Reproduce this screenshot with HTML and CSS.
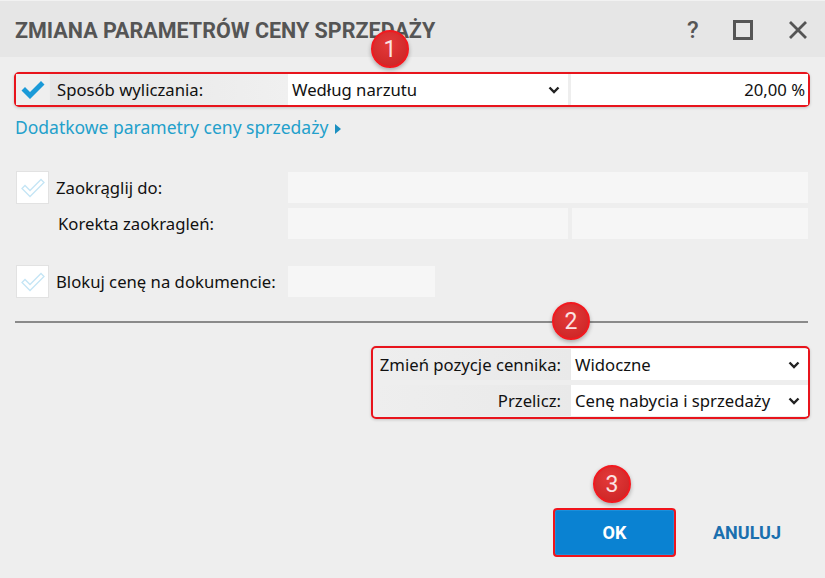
FILE: index.html
```html
<!DOCTYPE html>
<html lang="pl">
<head>
    <meta charset="UTF-8">
    <meta name="viewport" content="width=device-width, initial-scale=1.0">
    <title>Zmiana parametrów ceny sprzedaży</title>
    <link rel="stylesheet" href="styles.css">
</head>
<body>
    <div class="dialog">
        <header class="titlebar">
            <h1>ZMIANA PARAMETRÓW CENY SPRZEDAŻY</h1>
            <div class="win-buttons">
                <span class="help">?</span>
                <svg class="win-icon" width="22" height="22" viewBox="0 0 22 22"><rect x="2.5" y="2.5" width="17" height="17" fill="none" stroke="#555" stroke-width="3"/></svg>
                <svg class="win-icon" width="22" height="22" viewBox="0 0 22 22"><path d="M3 3 L19 19 M19 3 L3 19" stroke="#555" stroke-width="2.8" fill="none"/></svg>
            </div>
        </header>

        <main class="content">
            <div class="row highlight">
                <div class="check-cell">
                    <svg width="24" height="20" viewBox="0 0 24 20"><polygon points="0.5,10.5 4,7 9,12 20,1 23.5,4.5 9,19" fill="#1b9ad8"/></svg>
                </div>
                <div class="label label-shaded">Sposób wyliczania:</div>
                <div class="field white select">Według narzutu <svg class="chevron" width="12" height="8" viewBox="0 0 12 8"><path d="M1.5 1.5 L6 6 L10.5 1.5" stroke="#222" stroke-width="2.4" fill="none"/></svg></div>
                <div class="field white value second">20,00 %</div>
                <span class="badge badge-1">1</span>
            </div>

            <a class="more" href="#">Dodatkowe parametry ceny sprzedaży <span class="arrow"></span></a>

            <div class="row row-rounding">
                <div class="checkbox">
                    <svg width="24" height="20" viewBox="0 0 24 20"><polygon points="1,10.5 4,7.5 9,12.5 20,1.5 23,4.5 9,18.5" fill="#fff" stroke="#c4e5f5" stroke-width="1.3"/></svg>
                </div>
                <div class="label">Zaokrąglij do:</div>
                <div class="field grey wide"></div>
            </div>
            <div class="row row-tight">
                <div></div>
                <div class="label indent">Korekta zaokragleń:</div>
                <div class="field grey"></div>
                <div class="field grey second"></div>
            </div>

            <div class="row row-lock">
                <div class="checkbox">
                    <svg width="24" height="20" viewBox="0 0 24 20"><polygon points="1,10.5 4,7.5 9,12.5 20,1.5 23,4.5 9,18.5" fill="#fff" stroke="#c4e5f5" stroke-width="1.3"/></svg>
                </div>
                <div class="label">Blokuj cenę na dokumencie:</div>
                <div class="field grey short"></div>
            </div>

            <div class="separator">
                <span class="badge badge-2">2</span>
            </div>

            <div class="recalc highlight">
                <div class="recalc-label">Zmień pozycje cennika:</div>
                <div class="field white select">Widoczne <svg class="chevron" width="12" height="8" viewBox="0 0 12 8"><path d="M1.5 1.5 L6 6 L10.5 1.5" stroke="#222" stroke-width="2.4" fill="none"/></svg></div>
                <div class="recalc-label">Przelicz:</div>
                <div class="field white select">Cenę nabycia i sprzedaży <svg class="chevron" width="12" height="8" viewBox="0 0 12 8"><path d="M1.5 1.5 L6 6 L10.5 1.5" stroke="#222" stroke-width="2.4" fill="none"/></svg></div>
            </div>
        </main>

        <footer class="actions">
            <div class="ok-wrap">
                <span class="badge badge-3">3</span>
                <button class="btn-ok">OK</button>
            </div>
            <button class="btn-cancel">ANULUJ</button>
        </footer>
    </div>
</body>
</html>
```

FILE: styles.css
```css
body {
    margin: 0;
    font-family: "Noto Sans", "Open Sans", sans-serif;
    background-color: #eeeeee;
    color: #111;
}
.dialog {
    width: 825px;
    height: 578px;
    background-color: #eeeeee;
    overflow: hidden;
}
.titlebar {
    height: 57px;
    background-color: #e6e6e6;
    border-top: 1px solid #f2f2f2;
    box-sizing: border-box;
    display: flex;
    align-items: center;
    justify-content: space-between;
    padding: 0 16px 0 15px;
}
.titlebar h1 {
    margin: 2px 0 0 0;
    font-family: Roboto, "Liberation Sans", sans-serif;
    font-weight: bold;
    font-size: 21.5px;
    color: #555;
}
.win-buttons {
    display: flex;
    align-items: center;
    gap: 33px;
    margin-top: 2px;
}
.help {
    font-family: Roboto, sans-serif;
    font-size: 24px;
    font-weight: 500;
    color: #555;
    width: 14px;
    margin-right: -2px;
}
.win-icon {
    display: block;
}

.content {
    padding: 15px 15px 0 14px;
}
.row {
    position: relative;
    display: grid;
    grid-template-columns: 33px 239px 280px 1fr;
    height: 33px;
    padding: 0 2px;
    font-size: 16.7px;
}
.highlight {
    border: 2px solid #e8141c;
    border-radius: 5px;
    box-shadow: 0 1px 3px rgba(0,0,0,0.18);
}
.row.highlight {
    height: 31px;
    padding: 0;
}
.check-cell {
    background-color: #efefef;
    display: flex;
    align-items: center;
    justify-content: center;
}
.checkbox {
    background-color: #fff;
    border: 1px solid #e2e2e2;
    box-sizing: border-box;
    display: flex;
    align-items: center;
    justify-content: center;
}
.label {
    display: flex;
    align-items: center;
    padding-left: 7px;
}
.label.indent {
    padding-left: 9px;
}
.label-shaded {
    margin-left: 1px;
    background: linear-gradient(to right, #e6e6e6, #f0f0f0);
}
.field {
    display: flex;
    align-items: center;
    box-sizing: border-box;
}
.white {
    background-color: #fff;
}
.grey {
    background-color: #f6f6f6;
    margin: 1px 0;
}
.second {
    margin-left: 3px;
}
.row-tight .second {
    margin-left: 4px;
}
.wide {
    grid-column: 3 / 5;
}
.short {
    width: 147px;
}
.select {
    justify-content: space-between;
    padding: 0 8px 0 4px;
}
.value {
    justify-content: flex-end;
    padding-right: 3px;
}
.chevron {
    display: block;
}

.more {
    display: inline-flex;
    align-items: center;
    height: 22px;
    margin: 9px 0 0 1px;
    font-size: 17.5px;
    color: #23a0cb;
    text-decoration: none;
}
.arrow {
    width: 0;
    height: 0;
    margin-left: 7px;
    margin-top: 3px;
    border-left: 6px solid #1b8fc0;
    border-top: 5px solid transparent;
    border-bottom: 5px solid transparent;
}
.row-rounding {
    margin-top: 32px;
}
.row-tight {
    margin-top: 3px;
}
.row-lock {
    margin-top: 25px;
}
.separator {
    position: relative;
    margin: 23px 2px 0 1px;
    height: 0;
    border-top: 2px solid #8a8a8a;
}

.recalc {
    display: grid;
    grid-template-columns: 198px 1fr;
    grid-template-rows: 31px 31px;
    row-gap: 5px;
    width: 435px;
    margin: 23px 0 0 auto;
    padding: 1px 0;
    font-size: 16.7px;
}
.recalc-label {
    display: flex;
    align-items: center;
    justify-content: flex-end;
    padding-right: 10px;
    margin-left: 1px;
    background: linear-gradient(to right, #eeeeee, #e9e9e9);
}

.badge {
    position: absolute;
    width: 38px;
    height: 38px;
    box-sizing: border-box;
    border-radius: 50%;
    border: 2px solid #f2191f;
    background: radial-gradient(circle at 45% 35%, #e43a3a, #c82222);
    box-shadow: 0 2px 4px rgba(0,0,0,0.3);
    color: #fbe3e3;
    font-family: Roboto, sans-serif;
    font-size: 23px;
    display: flex;
    align-items: center;
    justify-content: center;
}
.badge-1 {
    left: 355px;
    top: -44px;
}
.badge-2 {
    left: 537px;
    top: -21px;
}
.badge-3 {
    left: 40px;
    top: -43px;
}

.actions {
    display: flex;
    align-items: center;
    justify-content: flex-end;
    margin-top: 89px;
    padding-right: 44px;
}
.ok-wrap {
    position: relative;
}
.btn-ok {
    width: 123px;
    height: 49px;
    border: 2px solid #f0141c;
    border-radius: 4px;
    background-color: #0a82d2;
    box-shadow: inset 0 0 0 1px #1b8fdb;
    color: #fff;
    font-family: Roboto, sans-serif;
    font-weight: bold;
    font-size: 18px;
    display: block;
}
.btn-cancel {
    margin-left: 37px;
    padding: 0;
    border: none;
    background: none;
    color: #1a6fae;
    font-family: Roboto, sans-serif;
    font-weight: bold;
    font-size: 18px;
}
```
